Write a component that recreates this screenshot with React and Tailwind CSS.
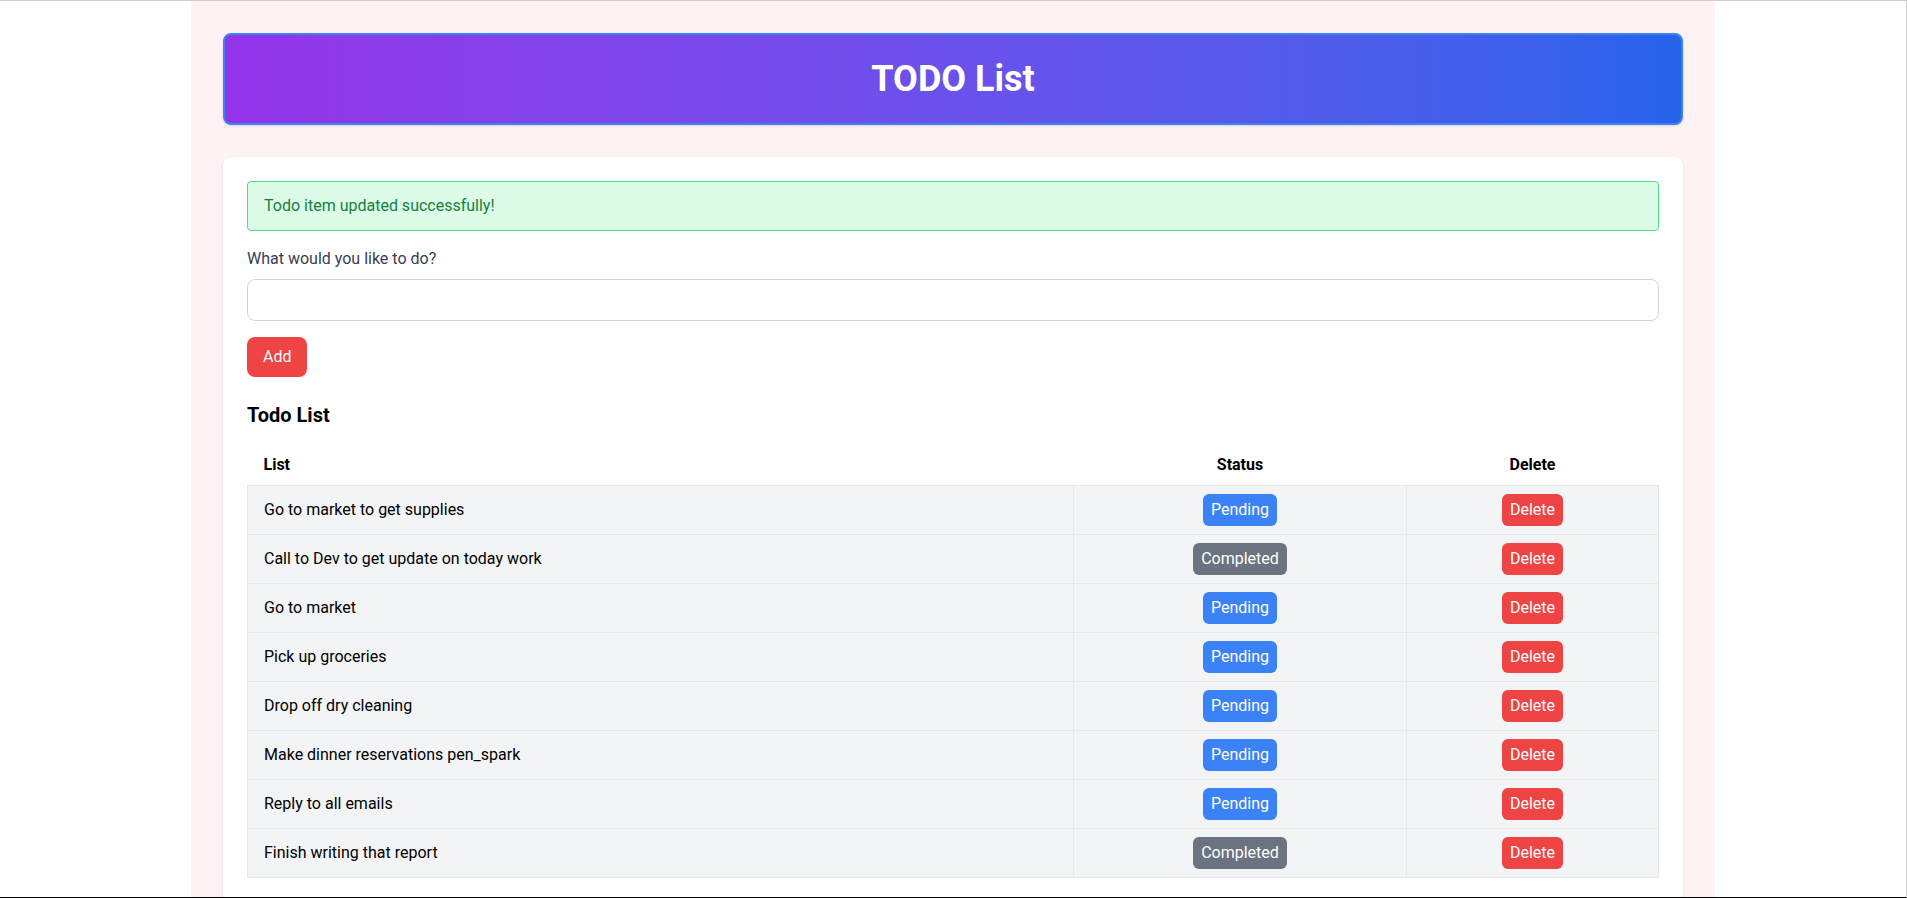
import React, { useState } from 'react';

const initialTodos = [
  { id: 1, text: 'Go to market to get supplies', done: false },
  { id: 2, text: 'Call to Dev to get update on today work', done: true },
  { id: 3, text: 'Go to market', done: false },
  { id: 4, text: 'Pick up groceries', done: false },
  { id: 5, text: 'Drop off dry cleaning', done: false },
  { id: 6, text: 'Make dinner reservations pen_spark', done: false },
  { id: 7, text: 'Reply to all emails', done: false },
  { id: 8, text: 'Finish writing that report', done: true },
];

const App = () => {
  const [todos, setTodos] = useState(initialTodos);
  const [value, setValue] = useState('');
  const [message, setMessage] = useState('Todo item updated successfully!');

  const addTodo = () => {
    if (!value.trim()) return;
    setTodos((t) => [...t, { id: Date.now(), text: value.trim(), done: false }]);
    setValue('');
    setMessage('Todo item added successfully!');
  };

  const toggle = (id) => {
    setTodos((t) => t.map((item) => (item.id === id ? { ...item, done: !item.done } : item)));
    setMessage('Todo item updated successfully!');
  };

  const remove = (id) => {
    setTodos((t) => t.filter((item) => item.id !== id));
    setMessage('Todo item deleted successfully!');
  };

  return (
    <div
      className="h-[898px] overflow-hidden border-t border-r border-b border-t-[#cfcfcf] border-r-[#cfcfcf] border-b-black bg-white"
      style={{ fontFamily: 'Roboto, "Noto Sans", sans-serif' }}
    >
      <div className="mx-auto min-h-full w-[1524px] bg-[#fef2f2] p-8">
        <header className="mb-8 rounded-lg border-2 border-[#3b82f6] bg-gradient-to-r from-[#9333ea] to-[#2563eb] py-6 text-center shadow">
          <h1 className="text-4xl font-bold text-white">TODO List</h1>
        </header>

        <main className="rounded-lg bg-white p-6 shadow">
          {message && (
            <div className="mb-4 rounded border border-[#4ade80] bg-[#dcfce7] px-4 py-3 text-[#15803d]">
              {message}
            </div>
          )}

          <label htmlFor="todo" className="mb-2 block text-[#374151]">
            What would you like to do?
          </label>
          <input
            id="todo"
            type="text"
            value={value}
            onChange={(e) => setValue(e.target.value)}
            className="block w-full rounded-lg border border-[#d1d5db] px-3 py-2 text-[#1f2937] outline-none"
          />
          <button
            type="button"
            onClick={addTodo}
            className="mt-4 rounded-lg bg-[#ef4444] px-4 py-2 text-white"
          >
            Add
          </button>

          <h2 className="mb-4 mt-6 text-xl font-bold text-black">Todo List</h2>

          <table className="w-full table-fixed border-collapse">
            <thead>
              <tr>
                <th className="px-4 py-2 text-left font-bold text-black">List</th>
                <th className="w-[333px] px-4 py-2 text-center font-bold text-black">Status</th>
                <th className="w-[252px] px-4 py-2 text-center font-bold text-black">Delete</th>
              </tr>
            </thead>
            <tbody>
              {todos.map((todo) => (
                <tr key={todo.id} className="bg-[#f3f4f6]">
                  <td className="border border-[#e5e7eb] px-4 py-3 text-black">{todo.text}</td>
                  <td className="border border-[#e5e7eb] px-4 py-2">
                    <div className="flex justify-center">
                      <button
                        type="button"
                        onClick={() => toggle(todo.id)}
                        className={
                          todo.done
                            ? 'rounded-md bg-[#6b7280] px-2 py-1 text-white'
                            : 'rounded-md bg-[#3b82f6] px-2 py-1 text-white'
                        }
                      >
                        {todo.done ? 'Completed' : 'Pending'}
                      </button>
                    </div>
                  </td>
                  <td className="border border-[#e5e7eb] px-4 py-2">
                    <div className="flex justify-center">
                      <button
                        type="button"
                        onClick={() => remove(todo.id)}
                        className="rounded-md bg-[#ef4444] px-2 py-1 text-white"
                      >
                        Delete
                      </button>
                    </div>
                  </td>
                </tr>
              ))}
            </tbody>
          </table>
        </main>
      </div>
    </div>
  );
};

export default App;
